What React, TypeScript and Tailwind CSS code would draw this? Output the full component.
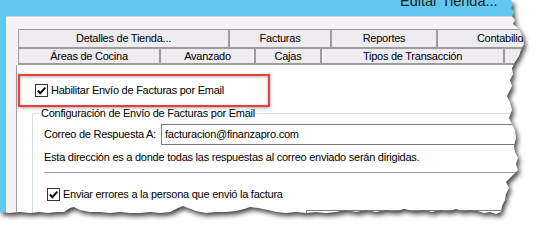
import React from 'react';

const row1 = [
    { label: 'Detalles de Tienda...', w: 'w-[212px]' },
    { label: 'Facturas', w: 'w-[102px]' },
    { label: 'Reportes', w: 'w-[106px]' },
    { label: 'Contabilidad', w: 'w-[138px]' },
];

const row2 = [
    { label: 'Áreas de Cocina', w: 'w-[143px]' },
    { label: 'Avanzado', w: 'w-[95px]' },
    { label: 'Cajas', w: 'w-[66px]' },
    { label: 'Tipos de Transacción', w: 'w-[183px]' },
    { label: 'General', w: 'w-[80px]' },
];

// torn paper outline (clockwise)
const paper: [number, number][] = [
    [0, 0], [511, 0], [513, 4], [511, 8], [514, 12], [512, 16], [515, 20], [513, 24], [518, 28], [521, 33],
    [523, 38], [524, 44], [521, 50], [519, 56], [515, 62], [512, 68], [513, 74], [510, 80], [512, 86],
    [509, 92], [507, 96], [510, 102], [512, 110], [509, 118], [512, 124], [515, 130], [516, 138],
    [514, 146], [515, 152], [518, 158], [516, 164], [518, 170], [512, 176], [506, 182], [509, 188],
    [506, 194], [505, 200], [502, 206], [501, 212], [496, 214], [490, 212], [484, 213], [478, 211],
    [470, 210], [462, 211], [456, 209], [450, 211], [440, 210], [432, 212], [424, 210], [414, 211],
    [404, 209], [396, 211], [386, 210], [376, 212], [366, 210], [356, 212], [346, 210], [336, 212],
    [326, 213], [316, 212], [306, 213], [296, 212], [286, 213], [276, 212], [268, 210], [258, 208],
    [250, 207], [244, 209], [236, 211], [226, 212], [216, 212], [206, 213], [196, 211], [188, 208],
    [183, 206], [178, 208], [170, 212], [160, 213], [150, 212], [140, 213], [130, 213], [120, 212],
    [110, 213], [100, 212], [90, 212], [80, 210], [74, 207], [70, 208], [64, 212], [56, 212], [48, 213],
    [40, 212], [30, 213], [20, 212], [10, 213], [0, 212],
];

const paperPath = 'M' + paper.map(([x, y]) => `${x} ${y}`).join(' L') + ' Z';
const outsidePath = 'M-20 -20 H600 V300 H-20 Z ' + paperPath;

const Check = () => (
    <span className="flex w-[13px] h-[13px] shrink-0 items-center justify-center border border-[#333] bg-white">
        <svg width="11" height="11" viewBox="0 0 11 11">
            <path d="M1.8 5.6 L4.3 8.2 L9.3 2.6" fill="none" stroke="#111" strokeWidth="2.1" />
        </svg>
    </span>
);

const TornEdge = () => (
    <svg className="absolute inset-0 pointer-events-none" width="547" height="249" viewBox="0 0 547 249">
        <defs>
            <clipPath id="outside">
                <path d={outsidePath} clipRule="evenodd" />
            </clipPath>
            <filter id="soft" x="-10%" y="-10%" width="120%" height="120%">
                <feGaussianBlur stdDeviation="2.4" />
            </filter>
        </defs>
        <path d={outsidePath} fill="#fff" fillRule="evenodd" />
        <g clipPath="url(#outside)">
            <path d={paperPath} fill="#000" opacity="0.75" filter="url(#soft)" transform="translate(2 3)" />
        </g>
    </svg>
);

export default function App() {
    return (
        <div className="relative w-[547px] h-[249px] overflow-hidden bg-white text-black text-[11px] tracking-[-0.25px] whitespace-nowrap font-['Liberation_Sans',Arial,sans-serif]">
            <div className="flex flex-col w-[600px] h-full">
                {/* Title bar */}
                <div className="h-[16px] shrink-0 bg-[#5fc8ee] overflow-hidden pl-[400px]">
                    <div className="-mt-[6px] text-[14.5px] leading-[15px] tracking-normal text-[#1b1b1b]">Editar Tienda...</div>
                </div>

                <div className="flex flex-1">
                    <div className="w-[6px] bg-[#5fc8ee]" />
                    <div className="flex-1 flex flex-col bg-[#f5f3f7] border-t border-[#d6d4da] pt-[12px] pl-[10px]">
                        {/* Tabs */}
                        <div className="ml-[2px] flex flex-col">
                            <div className="flex h-[18px]">
                                {row1.map((t, i) => (
                                    <div
                                        key={t.label}
                                        className={`${t.w} shrink-0 flex items-center justify-center bg-[#eeecf1] border-t border-r-2 border-[#9c9c9c] ${i === 0 ? 'border-l' : ''}`}
                                    >
                                        {t.label}
                                    </div>
                                ))}
                            </div>
                            <div className="flex h-[18px] border-t-2 border-b-2 border-[#9c9c9c]">
                                {row2.map((t, i) => (
                                    <div
                                        key={t.label}
                                        className={`${t.w} shrink-0 flex items-center justify-center bg-[#eeecf1] border-r-2 border-[#9c9c9c] ${i === 0 ? 'border-l' : ''}`}
                                    >
                                        {t.label}
                                    </div>
                                ))}
                            </div>
                        </div>

                        {/* Tab panel */}
                        <div className="flex-1 bg-white border-l border-[#a0a0a0] pl-[1px] pt-[9px]">
                            <div className="w-[252px] h-[33px] flex items-center gap-[3px] pl-[15px] border-2 border-[#ec3d3d] shadow-[0_1px_3px_rgba(0,0,0,0.35),inset_0_1px_3px_rgba(0,0,0,0.3)]">
                                <Check />
                                <span>Habilitar Envío de Facturas por Email</span>
                            </div>

                            <fieldset className="ml-[14px] border-t border-l border-[#d5dfe5]">
                                <legend className="ml-[6px] px-[2px] leading-[13px]">
                                    Configuración de Envío de Facturas por Email
                                </legend>

                                <div className="pl-[11px]">
                                    <div className="flex items-center mt-[4px]">
                                        <span className="w-[117px] shrink-0">Correo de Respuesta A:</span>
                                        <div className="w-[380px] h-[21px] shrink-0 flex items-center pl-[3px] border border-[#7a7a7a]">
                                            facturacion@finanzapro.com
                                        </div>
                                    </div>

                                    <div className="mt-[6px] leading-[13px]">
                                        Esta dirección es a donde todas las respuestas al correo enviado serán dirigidas.
                                    </div>

                                    <div className="mt-[8px] h-px bg-[#a0a0a0]" />

                                    <div className="mt-[13px] pl-[3px] flex items-center gap-[3px]">
                                        <Check />
                                        <span>Enviar errores a la persona que envió la factura</span>
                                    </div>

                                    <div className="mt-[7px] pl-[3px] flex items-center gap-[3px]">
                                        <Check />
                                        <span className="w-[240px] shrink-0">Enviar errores a la dirección de notificación:</span>
                                        <div className="w-[240px] h-[21px] shrink-0 border border-[#7a7a7a]" />
                                    </div>
                                </div>
                            </fieldset>
                        </div>
                    </div>
                </div>
            </div>

            <TornEdge />
        </div>
    );
}
